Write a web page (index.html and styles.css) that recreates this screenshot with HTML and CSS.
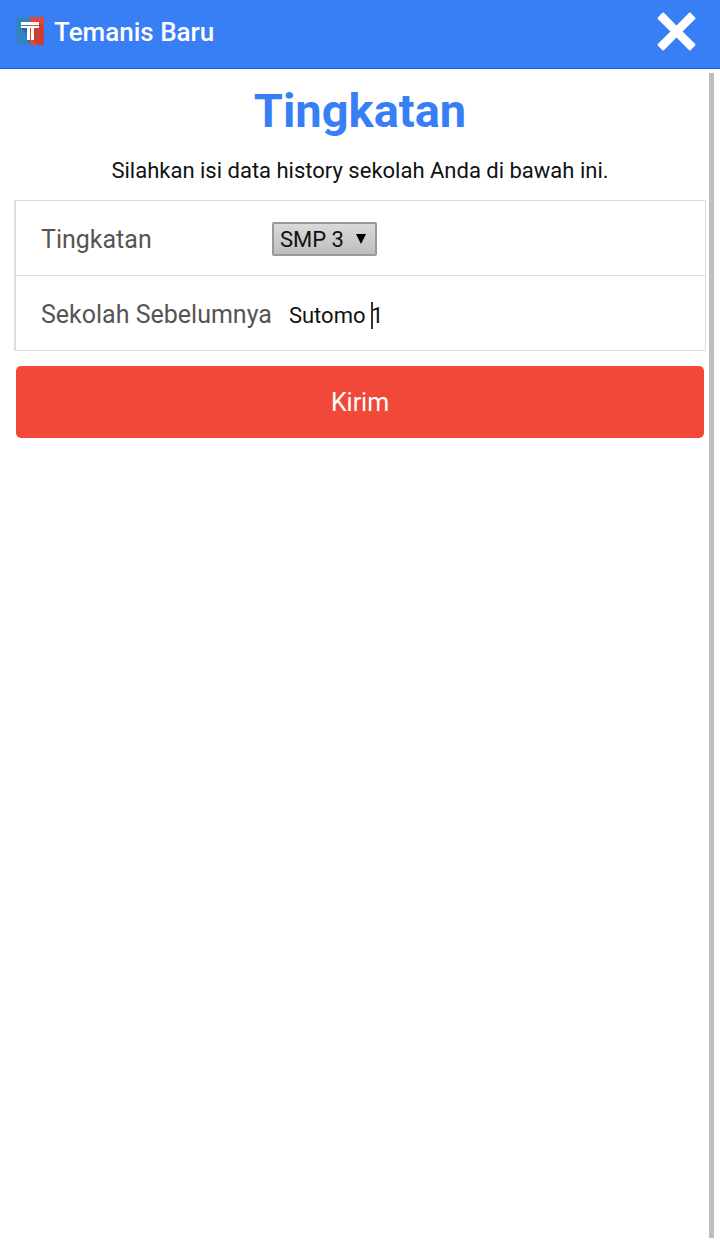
FILE: index.html
```html
<!DOCTYPE html>
<html lang="id">
<head>
<meta charset="utf-8">
<meta name="viewport" content="width=device-width, initial-scale=1">
<title>Temanis Baru</title>
<link rel="stylesheet" href="styles.css">
</head>
<body>
<header class="bar">
  <svg class="logo" viewBox="0 0 28 28" aria-hidden="true">
    <path fill="#3282c4" d="M1 0h13v28H1a1 1 0 0 1-1-1V1a1 1 0 0 1 1-1z"/>
    <path fill="#e2483a" d="M14 0h13a1 1 0 0 1 1 1v26a1 1 0 0 1-1 1H14z"/>
    <path fill="#2a69a0" d="M5 11h9v15l-3-3v-6z"/>
    <path fill="#c93f33" d="M23 5l5 5v17a1 1 0 0 1-1 1h-5l-5-5V11h6z"/>
    <path fill="#fff" d="M5 5h18v3H5zM5 9h18v2h-5v12h-3V11h-1v12h-3V11H5z"/>
  </svg>
  <span class="bar-title">Temanis Baru</span>
  <button class="close" type="button" aria-label="Tutup">
    <svg class="close-icon" viewBox="0 0 38 38" aria-hidden="true">
      <path fill="#fff" stroke="#fff" stroke-width="2" stroke-linejoin="round" d="M6 1.500L19 14.500 32 1.500 36.500 6 23.500 19 36.500 32 32 36.500 19 23.500 6 36.500 1.500 32 14.500 19 1.500 6z"/>
    </svg>
  </button>
</header>
<main class="content">
  <h1 class="heading">Tingkatan</h1>
  <p class="intro">Silahkan isi data history sekolah Anda di bawah ini.</p>
  <form class="form">
    <div class="list">
      <div class="item">
        <label class="label label-level" for="level">Tingkatan</label>
        <span class="select-box">
          <select class="select" id="level"><option>SMP 3</option></select>
          <svg class="arrow" viewBox="0 0 10 10" aria-hidden="true"><path d="M0 0h10L5 10z"/></svg>
        </span>
      </div>
      <div class="item">
        <label class="label" for="school">Sekolah Sebelumnya</label>
        <span class="input-box">
          <input class="input" id="school" type="text" value="Sutomo 1">
          <span class="caret"></span>
        </span>
      </div>
    </div>
    <button class="submit" type="button">Kirim</button>
  </form>
</main>
<div class="scrollbar"></div>
</body>
</html>
```
FILE: styles.css
```css
* {
  box-sizing: border-box;
}

body {
  margin: 0;
  background: #fff;
  color: #111;
  font-family: Roboto, "Liberation Sans", sans-serif;
}

.bar {
  display: flex;
  align-items: center;
  height: 69px;
  padding: 0 24px 6px 16px;
  background: #387ef5;
  border-bottom: 1px solid #0c60ee;
}

.logo {
  width: 28px;
  height: 28px;
  margin-right: 10px;
}

.bar-title {
  flex: 1;
  padding-top: 2px;
  color: #fff;
  font-size: 26px;
  font-weight: 500;
  line-height: 32px;
}

.close {
  display: flex;
  padding: 0;
  border: 0;
  background: none;
}

.close-icon {
  width: 39px;
  height: 39px;
}

.content {
  padding: 13px 14px;
}

.heading {
  margin: 0;
  color: #387ef5;
  font-size: 47px;
  font-weight: 700;
  line-height: 58px;
  text-align: center;
}

.intro {
  margin: 16px 0 14px;
  font-size: 22px;
  line-height: 30px;
  text-align: center;
}

.list {
  border: 1px solid #ddd;
  border-left-width: 2px;
}

.item {
  display: flex;
  align-items: center;
  box-sizing: content-box;
  height: 72px;
  padding: 2px 0 0 25px;
}

.item + .item {
  border-top: 1px solid #ddd;
}

.label {
  padding-top: 2px;
  margin-right: 17px;
  color: #555;
  font-size: 25px;
  line-height: 32px;
  white-space: nowrap;
}

.label-level {
  width: 214px;
}

.select-box,
.input-box {
  position: relative;
}

.select {
  display: block;
  width: 105px;
  height: 34px;
  padding: 0 6px;
  appearance: none;
  border: 2px solid #999;
  border-radius: 2px;
  background: linear-gradient(#dadada, #bebebe);
  color: #111;
  font: 22px Roboto, sans-serif;
}

.arrow {
  position: absolute;
  top: 12px;
  right: 11px;
  width: 10px;
  height: 10px;
  pointer-events: none;
}

.input-box {
  flex: 1;
}

.input {
  display: block;
  width: 100%;
  height: 36px;
  padding: 2px 0 0;
  border: 0;
  outline: 0;
  background: none;
  color: #111;
  font: 22px Roboto, sans-serif;
}

.caret {
  position: absolute;
  top: 6px;
  left: 82px;
  width: 2px;
  height: 27px;
  background: #333;
}

.submit {
  display: block;
  width: calc(100% - 4px);
  height: 72px;
  padding-top: 2px;
  margin: 15px auto 0;
  border: 0;
  border-radius: 5px;
  background: #f1483a;
  color: #fff;
  font: 25px Roboto, sans-serif;
}

.scrollbar {
  position: fixed;
  top: 73px;
  right: 6px;
  bottom: 3px;
  width: 5px;
  background: #bebebe;
}
```
